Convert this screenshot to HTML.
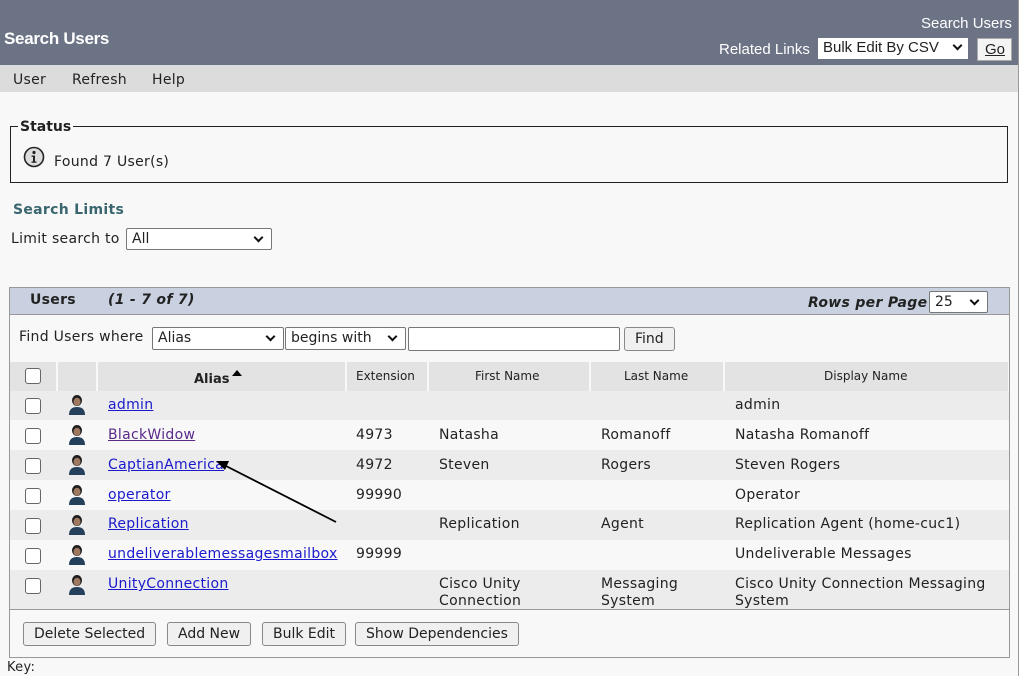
<!DOCTYPE html>
<html><head><meta charset="utf-8"><style>
*{margin:0;padding:0;box-sizing:border-box}
body{width:1023px;height:682px;background:#fff;font-family:"DejaVu Sans","Liberation Sans",sans-serif;font-size:13px;color:#222;position:relative;overflow:hidden}
.a{position:absolute;white-space:nowrap}
.t{font-size:14px;letter-spacing:0.3px;margin-top:1px}
.sel{position:absolute;background:#fff;border:1px solid #777;border-radius:2px;height:22px;font-size:14px;padding:2px 5px}
.sel i{position:absolute;right:9px;top:5px;width:7px;height:7px;border-right:2px solid #111;border-bottom:2px solid #111;transform:rotate(45deg)}
.btn{position:absolute;background:#f0f0f0;border:1px solid #888;border-radius:3px;height:24px;font-size:14px;padding:3px 10px}
.cb{position:absolute;width:16px;height:16px;border:1px solid #666;border-radius:3px;background:#fff}
.lnk{position:absolute;text-decoration:underline;color:#1a1acc}
.row{position:absolute;left:10px;width:999px}
.ico{position:absolute;width:20px;height:22px}
</style></head><body>
<div class="a" style="left:0;top:0;width:1018px;height:682px;background:#f8f8f8"></div>
<div class="a" style="left:0;top:0;width:1018px;height:65px;background:#6b7385"></div>
<div class="a" style="left:4px;top:29px;color:#fff;font:bold 17px 'Liberation Sans',sans-serif;letter-spacing:-0.3px">Search Users</div>
<div class="a" style="left:921px;top:15px;color:#fff;font:15px 'Liberation Sans',sans-serif">Search Users</div>
<div class="a" style="left:719px;top:41px;color:#fff;font:15px 'Liberation Sans',sans-serif">Related Links</div>
<div class="a" style="left:818px;top:38px;width:150px;height:21px;background:#fff;font:15px 'Liberation Sans',sans-serif;padding:1px 5px">Bulk Edit By CSV<span style="position:absolute;right:7px;top:4px;width:7px;height:7px;border-right:2px solid #111;border-bottom:2px solid #111;transform:rotate(45deg)"></span></div>
<div class="a" style="left:977px;top:38px;width:35px;height:23px;background:#f4f4f4;border:1px solid #aaa;font:15px 'Liberation Sans',sans-serif;padding:2px 7px"><u>Go</u></div>
<div class="a" style="left:0;top:65px;width:1018px;height:27px;background:#dcdcdc"></div>
<div class="a t" style="left:13px;top:71px">User</div>
<div class="a t" style="left:72px;top:71px">Refresh</div>
<div class="a t" style="left:152px;top:71px">Help</div>
<div class="a" style="left:1018px;top:0;width:5px;height:682px;background:#fff;border-left:1px solid #999"></div>

<div class="a" style="left:10px;top:126px;width:998px;height:57px;border:1px solid #222"></div>
<div class="a" style="left:18px;top:119px;background:#f8f8f8;padding:0 2px;font-weight:bold;font-size:14px">Status</div>
<svg class="a" style="left:23px;top:146px" width="22" height="22" viewBox="0 0 22 22"><circle cx="11" cy="11" r="9.5" fill="#ddd" stroke="#222" stroke-width="1.6"/><circle cx="11" cy="6.5" r="1.6" fill="#222"/><path d="M8.5 9.5h3.5v6h1.5v1.3h-5v-1.3h1.5v-4.7h-1.5z" fill="#222"/></svg>
<div class="a t" style="left:54px;top:153px">Found 7 User(s)</div>

<div class="a" style="left:13px;top:202px;color:#3a6670;font-weight:bold;font-size:14px;letter-spacing:0.3px">Search Limits</div>
<div class="a t" style="left:11px;top:230px">Limit search to</div>
<div class="sel" style="left:126px;top:228px;width:146px">All<i></i></div>

<div class="a" style="left:9px;top:287px;width:1001px;height:371px;border:1px solid #999;background:#f8f8f8"></div>
<div class="a" style="left:10px;top:288px;width:999px;height:27px;background:#c9d1e1;border-bottom:1px solid #999"></div>
<div class="a" style="left:30px;top:292px;font-weight:bold;font-size:14px;letter-spacing:0.3px">Users</div>
<div class="a" style="left:108px;top:292px;font-weight:bold;font-style:italic;font-size:14px;letter-spacing:0.3px">(1 - 7 of 7)</div>
<div class="a" style="left:808px;top:295px;font-weight:bold;font-style:italic;font-size:14px;letter-spacing:0.3px">Rows per Page</div>
<div class="sel" style="left:929px;top:291px;width:59px;height:22px">25<i></i></div>

<div class="a t" style="left:19px;top:328px">Find Users where</div>
<div class="sel" style="left:152px;top:327px;width:132px;height:23px">Alias<i></i></div>
<div class="sel" style="left:285px;top:327px;width:121px;height:23px">begins with<i></i></div>
<div class="a" style="left:408px;top:327px;width:212px;height:24px;background:#fff;border:1px solid #777;border-radius:2px"></div>
<div class="btn" style="left:624px;top:327px;height:24px">Find</div>

<div class="row" style="top:362px;height:29px;background:#f8f8f8"></div>
<div class="a" style="left:10px;top:362px;width:46px;height:29px;background:#e3e3e3"></div>
<div class="a" style="left:58px;top:362px;width:38px;height:29px;background:#e3e3e3"></div>
<div class="a" style="left:98px;top:362px;width:247px;height:29px;background:#e3e3e3"></div>
<div class="a" style="left:347px;top:362px;width:80px;height:29px;background:#e3e3e3"></div>
<div class="a" style="left:429px;top:362px;width:160px;height:29px;background:#e3e3e3"></div>
<div class="a" style="left:591px;top:362px;width:132px;height:29px;background:#e3e3e3"></div>
<div class="a" style="left:725px;top:362px;width:283px;height:29px;background:#e3e3e3"></div>
<div class="cb" style="left:25px;top:368px"></div>
<div class="a" style="left:194px;top:372px;font-weight:bold">Alias</div>
<div class="a" style="left:232px;top:370px;width:0;height:0;border-left:5px solid transparent;border-right:5px solid transparent;border-bottom:6px solid #000"></div>
<div class="a" style="left:356px;top:369px;font-size:12px">Extension</div>
<div class="a" style="left:475px;top:369px;font-size:12px">First Name</div>
<div class="a" style="left:624px;top:369px;font-size:12px">Last Name</div>
<div class="a" style="left:824px;top:369px;font-size:12px">Display Name</div>

<div class="row" style="top:391px;height:29px;background:#ececec"></div>
<div class="row" style="top:450px;height:30px;background:#ececec"></div>
<div class="row" style="top:510px;height:30px;background:#ececec"></div>
<div class="row" style="top:570px;height:40px;background:#ececec;border-bottom:1px solid #999"></div>

<div class="cb" style="left:25px;top:398px"></div>
<div class="cb" style="left:25px;top:428px"></div>
<div class="cb" style="left:25px;top:458px"></div>
<div class="cb" style="left:25px;top:488px"></div>
<div class="cb" style="left:25px;top:518px"></div>
<div class="cb" style="left:25px;top:548px"></div>
<div class="cb" style="left:25px;top:578px"></div>

<svg width="0" height="0" style="position:absolute"><defs><g id="u"><ellipse cx="10" cy="6.5" rx="5" ry="5.5" fill="#1e1e1e"/><ellipse cx="10" cy="7.8" rx="3.5" ry="4" fill="#a07a60"/><path d="M2 21 Q2 13 10 13 Q18 13 18 21z" fill="#24405a"/></g></defs></svg>
<svg class="ico" style="left:67px;top:394px"><use href="#u"/></svg>
<svg class="ico" style="left:67px;top:424px"><use href="#u"/></svg>
<svg class="ico" style="left:67px;top:454px"><use href="#u"/></svg>
<svg class="ico" style="left:67px;top:484px"><use href="#u"/></svg>
<svg class="ico" style="left:67px;top:514px"><use href="#u"/></svg>
<svg class="ico" style="left:67px;top:544px"><use href="#u"/></svg>
<svg class="ico" style="left:67px;top:574px"><use href="#u"/></svg>

<div class="lnk a t" style="left:108px;top:396px">admin</div>
<div class="lnk a t" style="left:108px;top:426px;color:#5a2a8a">BlackWidow</div>
<div class="lnk a t" style="left:108px;top:456px">CaptianAmerica</div>
<div class="lnk a t" style="left:108px;top:486px">operator</div>
<div class="lnk a t" style="left:108px;top:515px">Replication</div>
<div class="lnk a t" style="left:108px;top:545px">undeliverablemessagesmailbox</div>
<div class="lnk a t" style="left:108px;top:575px">UnityConnection</div>

<div class="a t" style="left:735px;top:396px">admin</div>
<div class="a t" style="left:356px;top:426px">4973</div><div class="a t" style="left:439px;top:426px">Natasha</div><div class="a t" style="left:601px;top:426px">Romanoff</div><div class="a t" style="left:735px;top:426px">Natasha Romanoff</div>
<div class="a t" style="left:356px;top:456px">4972</div><div class="a t" style="left:439px;top:456px">Steven</div><div class="a t" style="left:601px;top:456px">Rogers</div><div class="a t" style="left:735px;top:456px">Steven Rogers</div>
<div class="a t" style="left:356px;top:486px">99990</div><div class="a t" style="left:735px;top:486px">Operator</div>
<div class="a t" style="left:439px;top:515px">Replication</div><div class="a t" style="left:601px;top:515px">Agent</div><div class="a t" style="left:735px;top:515px">Replication Agent (home-cuc1)</div>
<div class="a t" style="left:356px;top:545px">99999</div><div class="a t" style="left:735px;top:545px">Undeliverable Messages</div>
<div class="a t" style="left:439px;top:575px;line-height:17px">Cisco Unity<br>Connection</div>
<div class="a t" style="left:601px;top:575px;line-height:17px">Messaging<br>System</div>
<div class="a t" style="left:735px;top:575px;line-height:17px">Cisco Unity Connection Messaging<br>System</div>

<svg class="a" style="left:0;top:0" width="1023" height="682"><line x1="336" y1="522" x2="226" y2="466" stroke="#000" stroke-width="1.8"/><path d="M216 461 L229 461 L225 470z" fill="#000"/></svg>

<div class="btn" style="left:23px;top:622px">Delete Selected</div>
<div class="btn" style="left:167px;top:622px">Add New</div>
<div class="btn" style="left:262px;top:622px">Bulk Edit</div>
<div class="btn" style="left:355px;top:622px">Show Dependencies</div>
<div class="a" style="left:7px;top:660px;font-size:13px;letter-spacing:0.3px">Key:</div>
<div class="a" style="left:0;top:676px;width:1023px;height:6px;background:#fff"></div>
</body></html>
